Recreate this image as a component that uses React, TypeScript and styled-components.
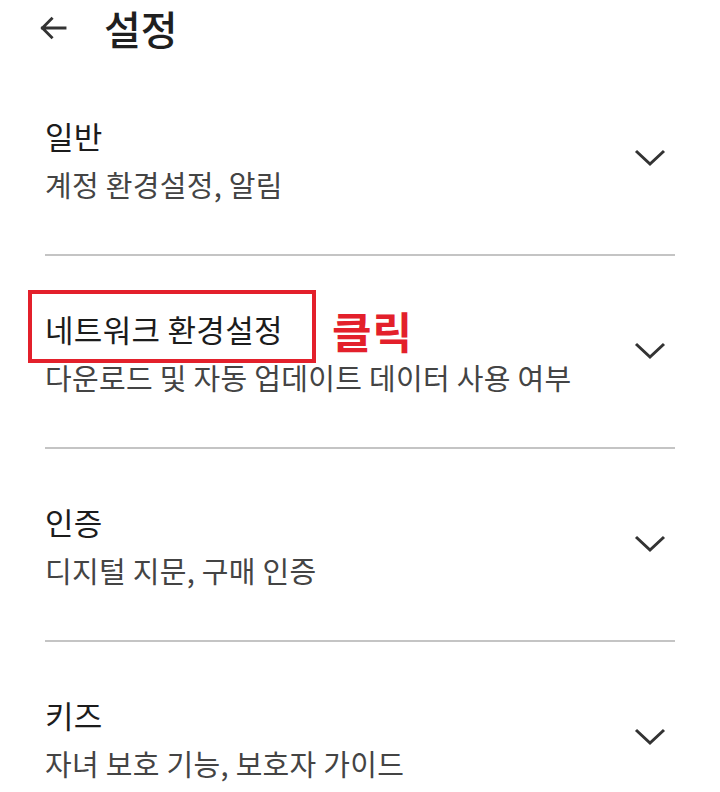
import React from "react";
import styled, { createGlobalStyle } from "styled-components";

const Global = createGlobalStyle`
  html, body {
    margin: 0;
    padding: 0;
    background: #ffffff;
  }
  body {
    font-family: "Noto Sans CJK KR", "Noto Sans", Roboto, sans-serif;
    -webkit-font-smoothing: antialiased;
  }
`;

const Page = styled.div`
  width: 720px;
  height: 792px;
  overflow: hidden;
  background: #fff;
`;

const Header = styled.header`
  display: flex;
  align-items: center;
  height: 55px;
  padding: 0 0 8px 34px;
  gap: 32px;
`;

const BackButton = styled.button`
  display: flex;
  align-items: center;
  justify-content: center;
  width: 38px;
  height: 38px;
  padding: 0;
  border: 0;
  background: none;
  color: #333;
`;

const Title = styled.h1`
  margin: 0;
  font-size: 40px;
  font-weight: 500;
  color: #1f1f1f;
  line-height: 1;
`;

const List = styled.ul`
  list-style: none;
  margin: 0;
  padding: 0 45px;
`;

const Item = styled.li`
  display: flex;
  align-items: center;
  height: 191px;
  border-bottom: 2px solid #c4c4c4;
`;

const TextBlock = styled.div`
  flex: 1;
  display: flex;
  flex-direction: column;
  gap: 9px;
  padding-top: 2px;
`;

const ItemTitle = styled.div`
  position: relative;
  align-self: flex-start;
  font-size: 31px;
  line-height: 40px;
  letter-spacing: 0.3px;
  color: #1c1c1c;
`;

const Highlight = styled.span`
  position: absolute;
  left: -17px;
  right: -33px;
  top: -19px;
  bottom: -14px;
  border: 4px solid #e3202b;
  pointer-events: none;
`;

const ClickLabel = styled.span`
  position: absolute;
  left: 287px;
  top: -4px;
  font-size: 43px;
  line-height: 50px;
  font-weight: 700;
  letter-spacing: 1px;
  color: #e3202b;
  white-space: nowrap;
`;

const ItemSub = styled.div`
  font-size: 29px;
  line-height: 38px;
  letter-spacing: 0.3px;
  color: #444;
`;

const Chevron = styled.span`
  display: flex;
  width: 34px;
  justify-content: center;
  margin-right: 8px;
  margin-top: -2px;
  color: #333;
`;

type Section = { title: string; sub: string; marked?: boolean };

const sections: Section[] = [
  { title: "일반", sub: "계정 환경설정, 알림" },
  { title: "네트워크 환경설정", sub: "다운로드 및 자동 업데이트 데이터 사용 여부", marked: true },
  { title: "인증", sub: "디지털 지문, 구매 인증" },
  { title: "키즈", sub: "자녀 보호 기능, 보호자 가이드" },
];

export default function App() {
  return (
    <Page>
      <Global />
      <Header>
        <BackButton aria-label="뒤로">
          <svg width="34" height="34" viewBox="0 0 24 24" fill="none">
            <path
              d="M20.5 12H4.5M11 5.5L4.5 12l6.5 6.5"
              stroke="currentColor"
              strokeWidth="2"
              strokeLinecap="square"
            />
          </svg>
        </BackButton>
        <Title>설정</Title>
      </Header>
      <List>
        {sections.map((s) => (
          <Item key={s.title}>
            <TextBlock>
              <ItemTitle>
                {s.title}
                {s.marked && (
                  <>
                    <Highlight />
                    <ClickLabel>클릭</ClickLabel>
                  </>
                )}
              </ItemTitle>
              <ItemSub>{s.sub}</ItemSub>
            </TextBlock>
            <Chevron>
              <svg width="32" height="20" viewBox="0 0 32 20" fill="none">
                <path d="M2 3l14 13L30 3" stroke="currentColor" strokeWidth="3" />
              </svg>
            </Chevron>
          </Item>
        ))}
      </List>
    </Page>
  );
}
